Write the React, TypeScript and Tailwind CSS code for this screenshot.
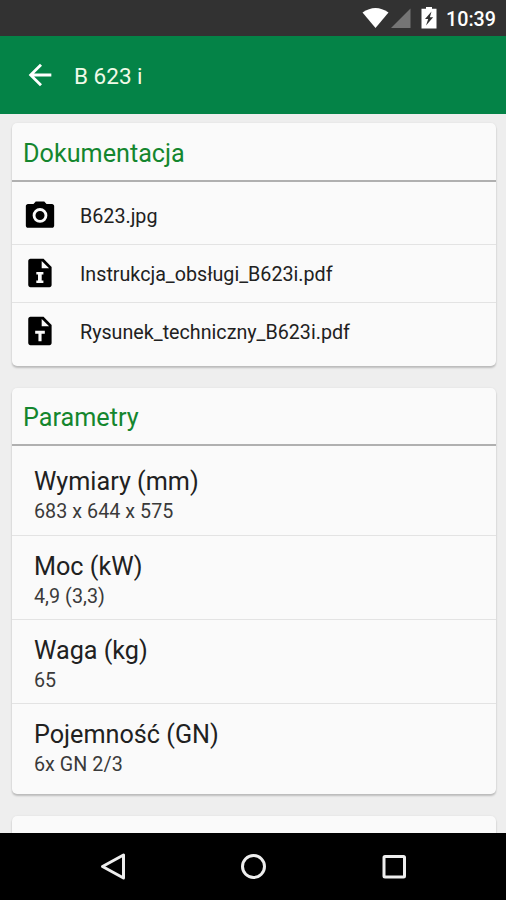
import React from "react";

const files = [
  { name: "B623.jpg", icon: "camera" },
  { name: "Instrukcja_obsługi_B623i.pdf", icon: "I" },
  { name: "Rysunek_techniczny_B623i.pdf", icon: "T" },
];

const params = [
  { label: "Wymiary (mm)", value: "683 x 644 x 575", height: "h-[85px]" },
  { label: "Moc (kW)", value: "4,9 (3,3)", height: "h-[84px]" },
  { label: "Waga (kg)", value: "65", height: "h-[84px]" },
  { label: "Pojemność (GN)", value: "6x GN 2/3", height: "h-[84px]" },
];

const card =
  "rounded-[5px] bg-[#fafafa] shadow-[0_2px_2px_rgba(0,0,0,0.2),0_0_2px_rgba(0,0,0,0.08)]";

function FileIcon({ kind }: { kind: string }) {
  if (kind === "camera") {
    return (
      <svg className="mb-0.5 size-[34px] shrink-0" viewBox="0 0 24 24">
        <path d="M9 2.5 7.4 4.2H3.5C2.7 4.2 2 4.9 2 5.7v13.8c0 .8.7 1.5 1.5 1.5h17c.8 0 1.5-.7 1.5-1.5V5.7c0-.8-.7-1.5-1.5-1.5h-3.9L15 2.5Z" />
        <circle cx="12" cy="12.3" r="4.2" fill="none" stroke="#fafafa" strokeWidth="2" />
      </svg>
    );
  }
  return (
    <svg className="mb-0.5 size-[34px] shrink-0" viewBox="0 0 24 24">
      <path d="M5.2 2h9.3l5.7 5.7v12.8c0 .8-.7 1.5-1.5 1.5H5.2c-.8 0-1.5-.7-1.5-1.5v-17C3.7 2.7 4.4 2 5.2 2Z" />
      <path d="M13.2 3.6v5h5.2Z" fill="#fafafa" />
      {kind === "I" ? (
        <path d="M9.4 11.3h5v1.8h-1.2v4.2h1.2v1.8h-5v-1.8h1.2v-4.2H9.4Z" fill="#fafafa" />
      ) : (
        <path d="M8.6 11.8h6.8v2.1h-2.3v5.4h-2.2v-5.4H8.6Z" fill="#fafafa" />
      )}
    </svg>
  );
}

function CardTitle({ children, height }: { children: React.ReactNode; height: string }) {
  return (
    <h2 className={"flex items-center border-b-2 border-[#b0b0b0] pt-1 pl-[11px] text-[25.2px] leading-none text-[#14862e] " + height}>
      {children}
    </h2>
  );
}

export default function App() {
  return (
    <div className="flex h-[900px] w-[506px] flex-col overflow-hidden bg-[#eeeeee] font-['Roboto',sans-serif] text-[#212121]">
      <div className="flex h-9 shrink-0 items-center justify-end bg-[#323232] pr-[10px] text-white">
        <svg className="h-9 w-[88px]" viewBox="0 0 88 36">
          <path d="M12.5 12.5Q25.5 3.5 38.5 12.5L25.5 28Z" fill="white" />
          <path d="M60.5 8.5V28H41Z" fill="#757575" />
          <path d="M76 7h6v1.8h4.5V28.5h-15V8.8H76Z" fill="white" />
          <path d="M81.5 11.5 75 19h3.2L76 25.5l7.2-8.2h-3.3Z" fill="#323232" />
        </svg>
        <span className="ml-2 pt-[3px] text-[19.7px] leading-none font-medium">10:39</span>
      </div>

      <header className="flex h-[78px] shrink-0 items-center bg-[#048347] pl-[23px] text-white">
        <svg className="size-[34px]" viewBox="0 0 24 24" fill="white">
          <path d="M20 11H7.83l5.59-5.59L12 4l-8 8 8 8 1.41-1.41L7.83 13H20Z" />
        </svg>
        <h1 className="ml-[17px] pt-0.5 text-[22.5px] leading-none text-[#f0fae8]">B 623 i</h1>
      </header>

      <main className="flex min-h-0 flex-1 flex-col gap-[22px] overflow-hidden pt-[9px] pr-[10px] pl-3">
        <section className={"h-[243px] shrink-0 " + card}>
          <CardTitle height="h-[59px]">Dokumentacja</CardTitle>
          <ul className="pt-[5px]">
            {files.map((f) => (
              <li key={f.name} className="flex h-[58px] items-center border-b border-[#e3e3e3] pl-[11px] last:border-transparent">
                <FileIcon kind={f.icon} />
                <span className="ml-[23px] pt-[3px] text-[19.7px] leading-none">{f.name}</span>
              </li>
            ))}
          </ul>
        </section>

        <section className={"h-[406px] shrink-0 " + card}>
          <CardTitle height="h-[58px]">Parametry</CardTitle>
          <dl className="pt-[5px]">
            {params.map((p) => (
              <div key={p.label} className={"border-b border-[#e3e3e3] pt-4 pl-[22px] last:border-transparent " + p.height}>
                <dt className="text-[25.2px] leading-[30px]">{p.label}</dt>
                <dd className="pt-0.5 text-[19.7px] leading-[26px] tracking-[0.05px] text-[#3a3a3a]">{p.value}</dd>
              </div>
            ))}
          </dl>
        </section>

        <section className={"h-[60px] shrink-0 " + card} />
      </main>

      <nav className="h-[67px] shrink-0 bg-black">
        <svg className="h-[67px] w-[506px]" viewBox="0 0 506 67" fill="none" stroke="#eeeeee" strokeWidth="3" strokeLinejoin="round">
          <path d="M123.5 22v23L102.5 33.5Z" />
          <circle cx="253.5" cy="33.5" r="11" />
          <rect x="384" y="23.5" width="20.5" height="20.5" rx="1" />
        </svg>
      </nav>
    </div>
  );
}
